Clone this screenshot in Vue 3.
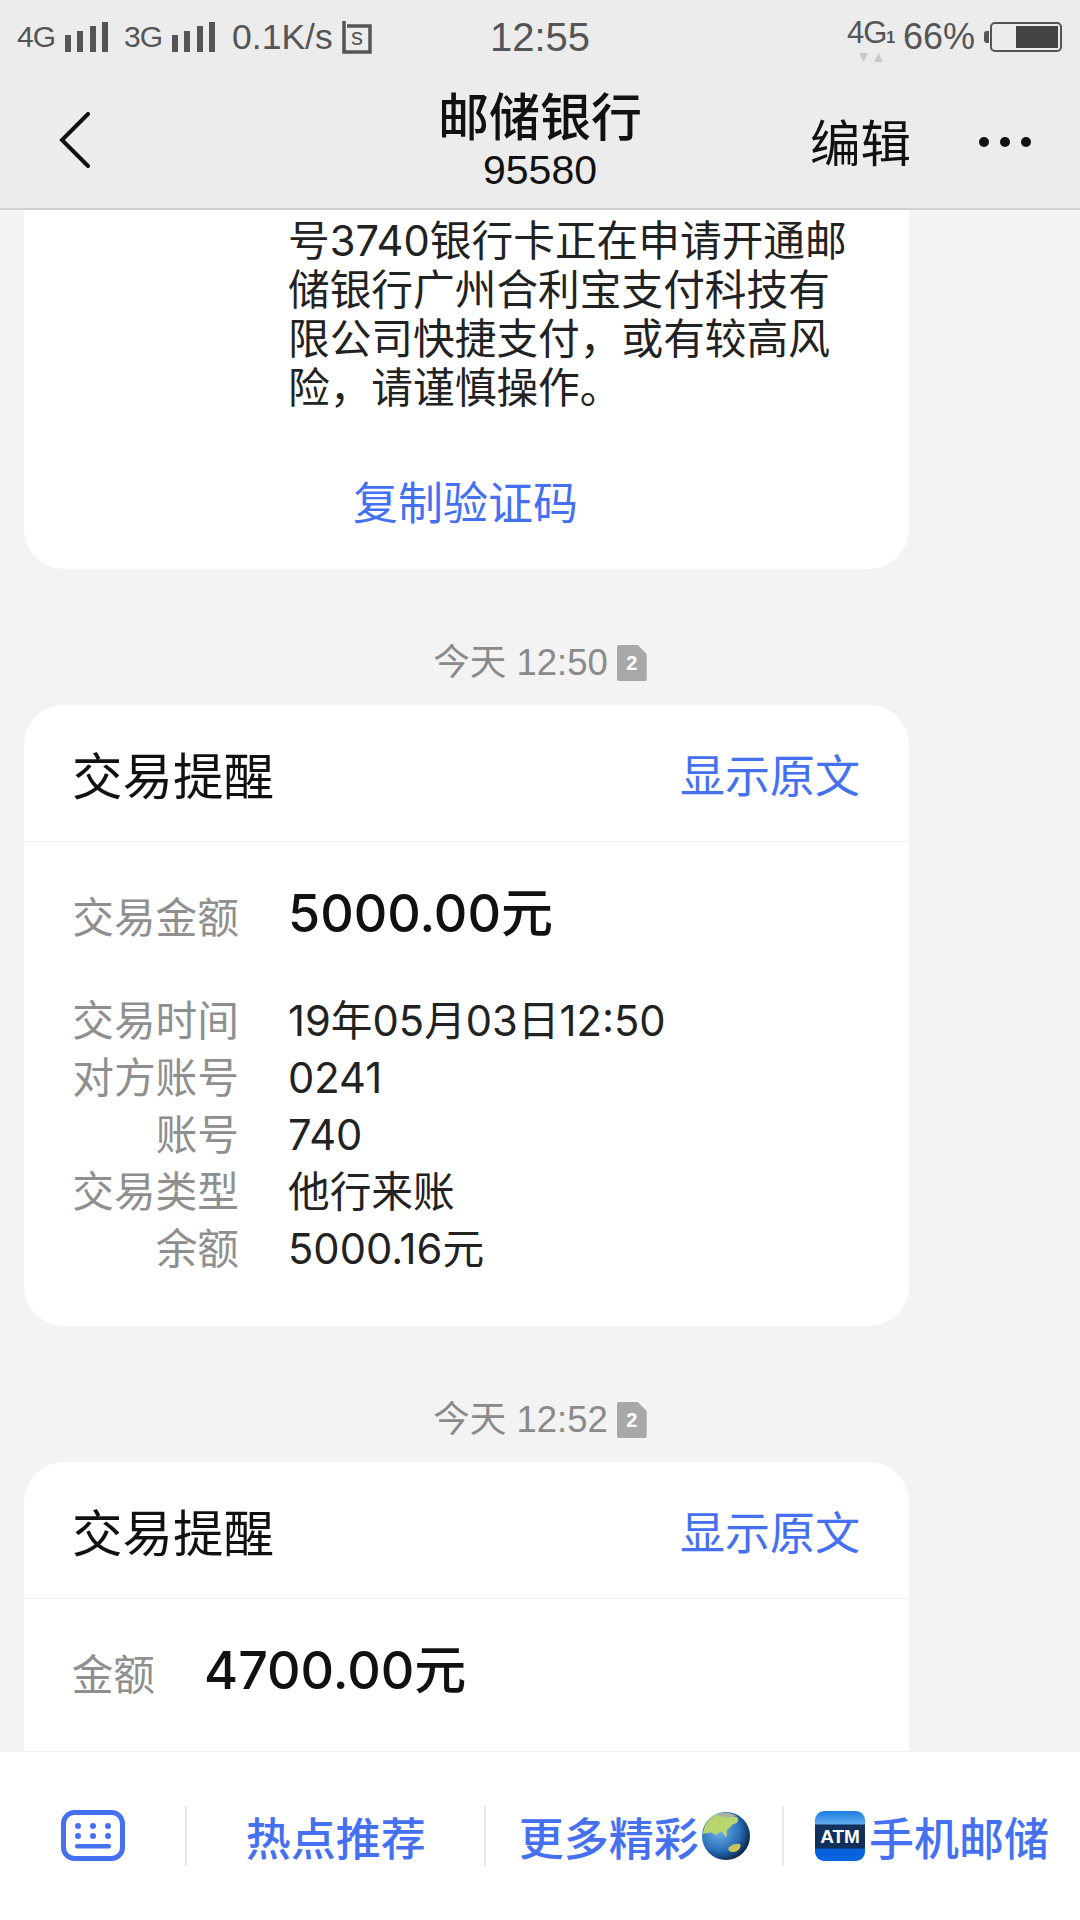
<script setup>
import { ref } from 'vue'

const details = ref([
  { label: '交易时间', value: '19年05月03日12:50' },
  { label: '对方账号', value: '0241' },
  { label: '账号', value: '740' },
  { label: '交易类型', value: '他行来账' },
  { label: '余额', value: '5000.16元' }
])

const smsLines = ['号3740银行卡正在申请开通邮', '储银行广州合利宝支付科技有', '限公司快捷支付，或有较高风', '险，请谨慎操作。']
</script>

<template>
  <div class="phone">
    <header class="top">
      <div class="status">
        <div class="status-left">
          <span class="net">4G</span>
          <svg class="bars" width="43" height="32" viewBox="0 0 43 32"><path d="M0 14h6v17H0zM12 10h6v21h-6zM25 5h6v26h-6zM37 1h6v30h-6z" fill="#555" /></svg>
          <span class="net net-3g">3G</span>
          <svg class="bars" width="43" height="32" viewBox="0 0 43 32"><path d="M0 14h6v17H0zM12 10h6v21h-6zM25 5h6v26h-6zM37 1h6v30h-6z" fill="#555" /></svg>
          <span class="speed">0.1K/s</span>
          <svg class="sim" width="30" height="34" viewBox="0 0 30 34">
            <path d="M2 1v4h0v27h26V6H5" fill="none" stroke="#555" stroke-width="3.500" />
            <text x="15" y="25" text-anchor="middle" font-size="24" font-family="Liberation Sans" fill="#555">s</text>
          </svg>
        </div>
        <span class="clock">12:55</span>
        <div class="status-right">
          <span class="net-wrap">
            <span class="net-big">4G</span><span class="net-sub">1</span>
            <svg class="arrows" width="24" height="11" viewBox="0 0 24 11"><path d="M0 1h9L4.500 10zM15 10h9L19.500 1z" fill="#c9c9c9" /></svg>
          </span>
          <span class="pct">66%</span>
          <span class="battery-cap"></span>
          <span class="battery"><span class="battery-fill" :style="{ width: '66%' }"></span></span>
        </div>
      </div>
      <div class="nav">
        <svg class="back" width="32" height="56" viewBox="0 0 32 56"><path d="M29 2 3 28l26 26" fill="none" stroke="#111" stroke-width="4" stroke-linecap="round" /></svg>
        <div class="nav-title">
          <div class="name">邮储银行</div>
          <div class="number">95580</div>
        </div>
        <span class="edit">编辑</span>
        <span class="more"><i></i><i></i><i></i></span>
      </div>
    </header>

    <main class="messages">
      <div class="scroll">
        <section class="card sms">
          <p v-for="line in smsLines" :key="line">{{ line }}</p>
          <a class="copy">复制验证码</a>
        </section>

        <div class="time">今天 12:50<span class="sim-tag">2</span></div>
        <section class="card">
          <div class="card-head">
            <span class="card-title">交易提醒</span>
            <a class="raw">显示原文</a>
          </div>
          <div class="card-body">
            <div class="row amount-row">
              <span class="label">交易金额</span>
              <span class="amount">5000.00元</span>
            </div>
            <div v-for="item in details" :key="item.label" class="row">
              <span class="label">{{ item.label }}</span>
              <span class="value">{{ item.value }}</span>
            </div>
          </div>
        </section>

        <div class="time">今天 12:52<span class="sim-tag">2</span></div>
        <section class="card last">
          <div class="card-head">
            <span class="card-title">交易提醒</span>
            <a class="raw">显示原文</a>
          </div>
          <div class="card-body">
            <div class="row amount-row short">
              <span class="label">金额</span>
              <span class="amount">4700.00元</span>
            </div>
          </div>
        </section>
      </div>
    </main>

    <footer class="bar">
      <div class="tab tab-key">
        <svg width="64" height="52" viewBox="0 0 64 52">
          <rect x="2.500" y="2.500" width="59" height="46" rx="11" fill="none" stroke="#4571f0" stroke-width="5" />
          <g fill="#4571f0">
            <circle cx="17" cy="16" r="3" /><circle cx="32" cy="16" r="3" /><circle cx="47" cy="16" r="3" />
            <circle cx="17" cy="26" r="3" /><circle cx="32" cy="26" r="3" /><circle cx="47" cy="26" r="3" />
            <rect x="14" y="34" width="36" height="4.500" rx="2.200" />
          </g>
        </svg>
      </div>
      <div class="tab tab-hot">热点推荐</div>
      <div class="tab tab-more">
        更多精彩
        <svg class="emoji" width="48" height="48" viewBox="0 0 48 48">
          <defs>
            <radialGradient id="sea" cx="36%" cy="38%" r="72%">
              <stop offset="0" stop-color="#6fb4ea" />
              <stop offset="0.6" stop-color="#2a6fb8" />
              <stop offset="1" stop-color="#031a35" />
            </radialGradient>
          </defs>
          <circle cx="24" cy="24" r="24" fill="url(#sea)" />
          <path d="M1 22C2 12 8 5 15 2c6 3 14 2 20 3 2 3 1 6-3 7-3 1-4 4-7 6-1 3 1 6-1 7-3-2-3-6-6-5-2 1-3 4-6 2-3-3-6-1-11 0z" fill="#b9d66e" />
          <path d="M14 3c6-3 14-3 20 1-6 2-14 2-20-1z" fill="#a8b3a4" />
          <path d="M27 35c3-3 8-4 11-3 2 3-2 8-7 8-3 0-6-2-4-5z" fill="#c8c65a" />
        </svg>
      </div>
      <div class="tab tab-atm">
        <svg class="emoji" width="50" height="50" viewBox="0 0 50 50">
          <defs>
            <linearGradient id="atm" x1="0" y1="0" x2="0" y2="1">
              <stop offset="0" stop-color="#1a7ee0" />
              <stop offset="0.26" stop-color="#62a9ee" />
              <stop offset="0.28" stop-color="#12305a" />
              <stop offset="0.74" stop-color="#12305a" />
              <stop offset="0.76" stop-color="#0560dc" />
              <stop offset="1" stop-color="#0a66e0" />
            </linearGradient>
          </defs>
          <rect width="50" height="50" rx="9" fill="url(#atm)" />
          <text x="25" y="32" text-anchor="middle" font-size="19" font-weight="700" font-family="Liberation Sans" fill="#fff">ATM</text>
        </svg>
        手机邮储
      </div>
    </footer>
  </div>
</template>

<style>
html, body {
  margin: 0;
  background: #f3f3f3;
}
</style>

<style scoped>
.phone {
  width: 1080px;
  height: 1920px;
  display: flex;
  flex-direction: column;
  overflow: hidden;
  background: #f3f3f3;
  font-family: "Liberation Sans", "Noto Sans CJK SC", sans-serif;
}

.top {
  height: 208px;
  flex-shrink: 0;
  background: #ececec;
  border-bottom: 2px solid #cfcfcf;
}

.status {
  height: 74px;
  position: relative;
  display: flex;
  align-items: center;
  justify-content: space-between;
  padding: 0 18px 0 17px;
  color: #555;
}

.status-left,
.status-right {
  display: flex;
  align-items: center;
}

.net {
  font-size: 30px;
  letter-spacing: -1px;
  margin-right: 10px;
}

.net-3g {
  margin-left: 16px;
}

.speed {
  font-size: 35.500px;
  margin-left: 17px;
  margin-right: 9px;
}

.clock {
  position: absolute;
  left: 490px;
  top: 15px;
  font-size: 40px;
}

.net-wrap {
  position: relative;
  width: 50px;
  height: 44px;
  margin-right: 6px;
}

.net-big {
  font-size: 31px;
  letter-spacing: -1px;
}

.net-sub {
  font-size: 16px;
  font-weight: 700;
}

.arrows {
  position: absolute;
  left: 12px;
  bottom: -4px;
}

.pct {
  font-size: 36px;
  margin-right: 9px;
}

.battery-cap {
  width: 5px;
  height: 12px;
  background: #555;
  border-radius: 3px 0 0 3px;
  margin-right: 1px;
}

.battery {
  box-sizing: border-box;
  width: 72px;
  height: 30px;
  border: 2px solid #555;
  border-radius: 5px;
  padding: 2px;
  display: flex;
  justify-content: flex-end;
}

.battery-fill {
  background: #444;
}

.nav {
  height: 134px;
  display: flex;
  align-items: center;
  position: relative;
  color: #111;
}

.back {
  margin-left: 59px;
  margin-top: -2px;
}

.nav-title {
  position: absolute;
  left: 0;
  right: 0;
  top: 17px;
  text-align: center;
  pointer-events: none;
}

.name {
  font-size: 51px;
  line-height: 56px;
  font-weight: 500;
}

.number {
  font-size: 41px;
  line-height: 47px;
}

.edit {
  margin-left: auto;
  margin-top: -3px;
  font-size: 50.500px;
}

.more {
  display: flex;
  gap: 11px;
  margin: 2px 49px 0 68px;
}

.more i {
  width: 10px;
  height: 10px;
  border-radius: 50%;
  background: #111;
}

.messages {
  flex: 1;
  min-height: 0;
  overflow: hidden;
}

.scroll {
  margin-top: -4px;
}

.card {
  width: 885px;
  margin-left: 24px;
  background: #fff;
  border-radius: 40px;
  overflow: hidden;
}

.sms {
  border-radius: 0 0 40px 40px;
  padding: 11px 0 0 264px;
  box-sizing: border-box;
  height: 363px;
  color: #222;
  font-family: Inter, "Noto Sans CJK SC", sans-serif;
}

.sms p {
  margin: 0;
  font-size: 41.700px;
  line-height: 49px;
}

.copy {
  display: block;
  width: 0;
  white-space: nowrap;
  margin: 65px 0 0 65px;
  font-size: 45px;
  line-height: 52px;
  color: #4571f0;
}

.time {
  box-sizing: border-box;
  height: 136px;
  padding-top: 52px;
  display: flex;
  align-items: center;
  justify-content: center;
  gap: 9px;
  color: #8a8a8a;
  font-size: 36.500px;
  line-height: 44px;
}

.sim-tag {
  width: 30px;
  height: 36px;
  background: #a8a8a8;
  color: #fff;
  font-size: 20px;
  font-weight: 700;
  display: flex;
  align-items: center;
  justify-content: center;
  border-radius: 2px;
  clip-path: polygon(0 0, 70% 0, 100% 25%, 100% 100%, 0 100%);
}

.card-head {
  height: 137px;
  box-sizing: border-box;
  padding: 0 49px 0 48px;
  display: flex;
  align-items: center;
  justify-content: space-between;
  border-bottom: 1px solid #f1f1f1;
}

.card-title {
  font-size: 50.500px;
  color: #111;
}

.raw {
  font-size: 45px;
  color: #4571f0;
}

.card-body {
  padding: 36px 49px 48px 47px;
}

.row {
  display: flex;
  align-items: center;
  height: 57px;
  font-size: 41.700px;
  line-height: 57px;
}

.label {
  width: 168px;
  flex-shrink: 0;
  text-align: right;
  white-space: nowrap;
  color: #8f8f8f;
  margin-right: 49px;
}

.value {
  color: #222;
  font-family: Inter, "Noto Sans CJK SC", sans-serif;
}

.amount-row {
  height: 70px;
  margin-bottom: 45px;
}

.amount-row .label {
  margin-top: 10px;
}

.amount {
  font-family: Inter, "Noto Sans CJK SC", sans-serif;
  font-size: 52px;
  font-weight: 500;
  color: #111;
}

.short .label {
  width: 84px;
  margin-right: 49px;
}

.last {
  min-height: 400px;
}

.bar {
  height: 168px;
  flex-shrink: 0;
  background: #fff;
  border-top: 1px solid #f0f0f0;
  display: flex;
  align-items: center;
  color: #4571f0;
  font-size: 45px;
  font-weight: 500;
}

.tab {
  height: 60px;
  display: flex;
  align-items: center;
  justify-content: center;
  border-right: 2px solid #e8e8e8;
}

.tab-key { width: 186px; }
.tab-hot { width: 298px; }
.tab-more { width: 297px; }
.tab-atm { width: 297px; border-right: none; }

.emoji {
  flex-shrink: 0;
}

.tab-more .emoji {
  margin-left: 3px;
}

.tab-atm .emoji {
  margin-right: 4px;
}
</style>
